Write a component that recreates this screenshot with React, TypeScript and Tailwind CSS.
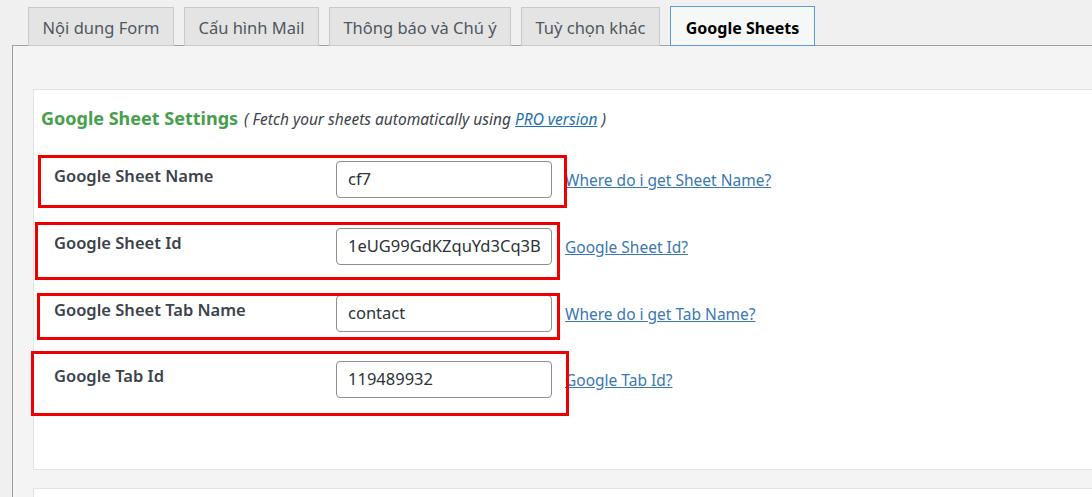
const tabs = [
  { label: "Nội dung Form", w: "w-[146px]" },
  { label: "Cấu hình Mail", w: "w-[135px]" },
  { label: "Thông báo và Chú ý", w: "w-[182px]" },
  { label: "Tuỳ chọn khác", w: "w-[139px]" },
];

const rows = [
  { label: "Google Sheet Name", value: "cf7", link: "Where do i get Sheet Name?", mt: "mt-[29px]" },
  { label: "Google Sheet Id", value: "1eUG99GdKZquYd3Cq3B", link: "Google Sheet Id?", mt: "mt-[30px]" },
  { label: "Google Sheet Tab Name", value: "contact", link: "Where do i get Tab Name?", mt: "mt-[30px]" },
  { label: "Google Tab Id", value: "119489932", link: "Google Tab Id?", mt: "mt-[29px]" },
];

// red annotation boxes drawn on top of the screenshot
const marks = [
  "left-[38px] top-[155px] w-[529px] h-[53px]",
  "left-[35px] top-[222px] w-[525px] h-[58px]",
  "left-[37px] top-[293px] w-[523px] h-[47px]",
  "left-[31px] top-[351px] w-[538px] h-[65px]",
];

export default function App() {
  return (
    <div className="relative h-[497px] w-[1092px] overflow-hidden bg-[#f0f0f0] font-['Noto_Sans',sans-serif] text-[#3c434a]">
      <div className="flex items-end gap-[10px] pl-[28px] pt-[6px]">
        {tabs.map((t) => (
          <div
            key={t.label}
            className={`${t.w} mb-[-1px] flex h-[39px] items-center justify-center border border-[#c9c9c9] bg-[#e4e4e4] pt-[3px] text-[16.5px] text-[#50575e]`}
          >
            {t.label}
          </div>
        ))}
        <div className="relative z-10 mb-[-1px] flex h-[40px] w-[145px] items-center justify-center border border-[#5b9dd9] bg-[#f6f7f7] pt-[3px] text-[16px] font-bold text-black">
          Google Sheets
        </div>
      </div>

      <div className="ml-[12px] border-l border-t border-[#a0a0a0] bg-[#f4f4f4] pl-[20px] pt-[43px]">
        <div className="h-[381px] border border-r-0 border-[#e2e2e2] bg-white pl-[7px] pt-[15px]">
          <div className="flex items-baseline gap-[6px]">
            <span className="text-[18px] font-bold text-[#46a04b]">Google Sheet Settings</span>
            <span className="text-[15.5px] italic text-[#3c434a]">
              ( Fetch your sheets automatically using{" "}
              <span className="text-[#2271b1] underline">PRO version</span> )
            </span>
          </div>

          {rows.map((r) => (
            <div key={r.label} className={`${r.mt} flex items-start`}>
              <div className="w-[295px] pl-[13px] pt-[3px] text-[16.5px] font-semibold leading-6 text-[#3c434a]">
                {r.label}
              </div>
              <div className="flex h-[37px] w-[216px] items-center overflow-hidden whitespace-nowrap rounded-[4px] border border-[#8c8f94] bg-white pl-[11px] text-[16.5px] text-[#2c3338]">
                {r.value}
              </div>
              <a className="ml-[13px] pt-[8px] text-[15.5px] text-[#3a77b3] underline">{r.link}</a>
            </div>
          ))}
        </div>
        <div className="mt-[18px] h-[40px] border border-r-0 border-[#e2e2e2] bg-white" />
      </div>

      {marks.map((m) => (
        <div key={m} className={`pointer-events-none absolute ${m} border-[3px] border-[#ee0000]`} />
      ))}
    </div>
  );
}
